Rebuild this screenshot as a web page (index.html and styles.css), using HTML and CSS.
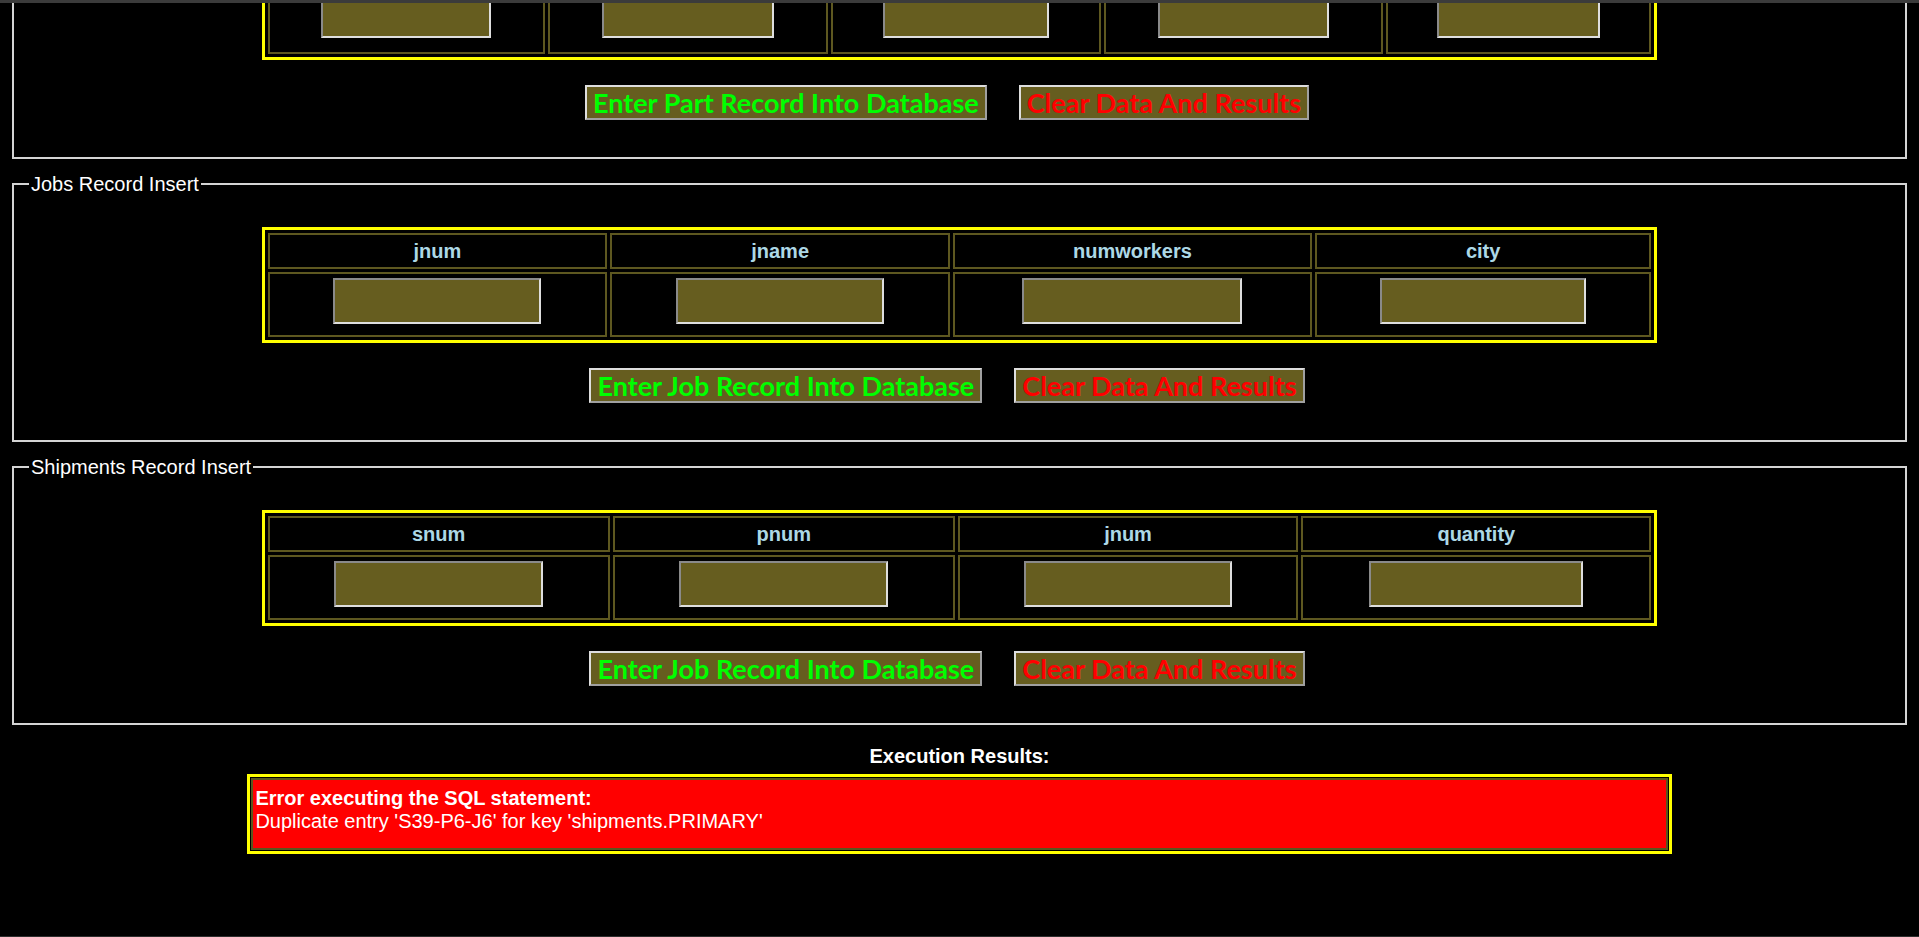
FILE: index.html
```html
<!DOCTYPE html>
<html lang="en">
<head>
<meta charset="utf-8">
<title>Record Insert</title>
<link rel="stylesheet" href="styles.css">
</head>
<body>
<div class="topbar"></div>
<div class="bottombar"></div>
<div class="page">
  <fieldset class="panel">
    <legend>Parts Record Insert</legend>
    <table class="grid grid--parts">
      <tr><th>pnum</th><th>pname</th><th>color</th><th>weight</th><th>city</th></tr>
      <tr>
        <td><input type="text" class="field w170"></td>
        <td><input type="text" class="field w172"></td>
        <td><input type="text" class="field w166"></td>
        <td><input type="text" class="field w171"></td>
        <td><input type="text" class="field w163"></td>
      </tr>
    </table>
    <div class="actions">
      <button class="btn btn--go">Enter Part Record Into Database</button>
      <button class="btn btn--clear">Clear Data And Results</button>
    </div>
  </fieldset>

  <fieldset class="panel">
    <legend>Jobs Record Insert</legend>
    <table class="grid">
      <tr><th>jnum</th><th>jname</th><th>numworkers</th><th>city</th></tr>
      <tr>
        <td><input type="text" class="field w208"></td>
        <td><input type="text" class="field w208"></td>
        <td><input type="text" class="field w220"></td>
        <td><input type="text" class="field w206"></td>
      </tr>
    </table>
    <div class="actions">
      <button class="btn btn--go">Enter Job Record Into Database</button>
      <button class="btn btn--clear">Clear Data And Results</button>
    </div>
  </fieldset>

  <fieldset class="panel">
    <legend>Shipments Record Insert</legend>
    <table class="grid grid--ship">
      <tr><th>snum</th><th>pnum</th><th>jnum</th><th>quantity</th></tr>
      <tr>
        <td><input type="text" class="field w209"></td>
        <td><input type="text" class="field w209"></td>
        <td><input type="text" class="field w208"></td>
        <td><input type="text" class="field w214"></td>
      </tr>
    </table>
    <div class="actions">
      <button class="btn btn--go">Enter Job Record Into Database</button>
      <button class="btn btn--clear">Clear Data And Results</button>
    </div>
  </fieldset>

  <section class="results">
    <div class="results-title">Execution Results:</div>
    <table class="results-table">
      <tr>
        <td><strong>Error executing the SQL statement:</strong><br>Duplicate entry 'S39-P6-J6' for key 'shipments.PRIMARY'</td>
      </tr>
    </table>
  </section>
</div>
</body>
</html>
```

FILE: styles.css
```css
html {
  background: #000;
}

body {
  margin: 0 10px;
  background: #000;
  color: #fff;
  font-family: "Liberation Sans", Arial, sans-serif;
  font-size: 20px;
  line-height: 23px;
}

.topbar {
  position: fixed;
  top: 0;
  left: 0;
  right: 0;
  height: 3px;
  background: #3b3b3b;
  z-index: 5;
}

.bottombar {
  position: fixed;
  bottom: 0;
  left: 0;
  right: 0;
  height: 1px;
  background: #2e2e2e;
  z-index: 5;
}

.page {
  margin-top: -113px;
}

.panel {
  margin: 0 2px 14px;
  padding: 7px 15px 12px;
  border: 2px solid #d4d4d4;
  min-inline-size: min-content;
}

.panel legend {
  padding: 0 2px;
  color: #fff;
  font-size: 20px;
  line-height: 22px;
}

.grid {
  width: 75%;
  margin: 25px auto 25px;
  border: 3px solid #ffff00;
  border-spacing: 3px;
}

.grid th {
  border: 2px solid #5e5820;
  padding: 5px 5px 4px;
  color: #add8e6;
  font-weight: bold;
  font-size: 20px;
  line-height: 23px;
  text-align: center;
}

.grid td {
  border: 2px solid #5e5820;
  padding: 4px 0 11px;
  text-align: center;
}

.grid--parts td {
  padding-bottom: 14px;
}

.field {
  display: block;
  margin: 0 auto;
  box-sizing: border-box;
  height: 46px;
  padding: 0 4px;
  background: #665d1f;
  color: #fff;
  font-family: "Liberation Sans", Arial, sans-serif;
  font-size: 18px;
  border: 2px solid;
  border-color: #8a8a8a #dedede #dedede #8a8a8a;
  outline: none;
}

.w163 { width: 163px; }
.w166 { width: 166px; }
.w170 { width: 170px; }
.w171 { width: 171px; }
.w172 { width: 172px; }
.w206 { width: 206px; }
.w208 { width: 208px; }
.w209 { width: 209px; }
.w214 { width: 214px; }
.w220 { width: 220px; }

.actions {
  display: flex;
  justify-content: center;
  gap: 32px;
  padding-right: 25px;
  margin-bottom: 25px;
}

.btn {
  margin: 0;
  padding: 0 6px;
  height: 35px;
  box-sizing: border-box;
  background: #665d1f;
  border: 2px solid;
  border-color: #dedede #a0a0a0 #a0a0a0 #dedede;
  font-family: Lato, "Open Sans", sans-serif;
  font-weight: bold;
  font-size: 27px;
  line-height: 31px;
  cursor: pointer;
}

.btn--go {
  color: #00ff00;
}

.btn--clear {
  color: #ff0000;
}

.results {
  margin-top: 20px;
}

.results-title {
  text-align: center;
  font-weight: bold;
  font-size: 20px;
  line-height: 23px;
  margin-bottom: 6px;
}

.results-table {
  width: 75%;
  margin: 0 auto;
  border: 3px solid #ffff00;
  border-spacing: 1px;
}

.results-table td {
  background: #ff0000;
  border: 2px solid #5a561e;
  padding: 7px 2px 15px;
  color: #fff;
  font-size: 20px;
  line-height: 23px;
  text-align: left;
}
```
